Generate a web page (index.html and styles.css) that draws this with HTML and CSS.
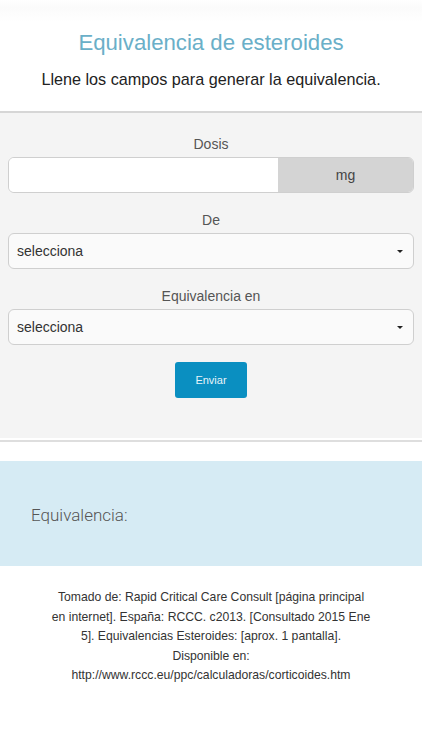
FILE: index.html
```html
<!DOCTYPE html>
<html lang="es">
<head>
<meta charset="utf-8">
<title>Equivalencia de esteroides</title>
<link rel="stylesheet" href="styles.css">
</head>
<body>
<header class="header">
  <h1 class="title">Equivalencia de esteroides</h1>
  <p class="subtitle">Llene los campos para generar la equivalencia.</p>
</header>
<section class="form">
  <div class="group">
    <div class="label">Dosis</div>
    <div class="input-group">
      <div class="input"></div>
      <div class="addon">mg</div>
    </div>
  </div>
  <div class="group">
    <div class="label">De</div>
    <div class="select"><span>selecciona</span><span class="caret"></span></div>
  </div>
  <div class="group">
    <div class="label">Equivalencia en</div>
    <div class="select"><span>selecciona</span><span class="caret"></span></div>
  </div>
  <div class="actions">
    <div class="button">Enviar</div>
  </div>
</section>
<section class="result">
  <div class="result-text">Equivalencia:</div>
</section>
<footer class="footer">
  Tomado de: Rapid Critical Care Consult [página principal<br>
  en internet]. España: RCCC. c2013. [Consultado 2015 Ene<br>
  5]. Equivalencias Esteroides: [aprox. 1 pantalla].<br>
  Disponible en:<br>
  http://www.rccc.eu/ppc/calculadoras/corticoides.htm
</footer>
</body>
</html>
```
FILE: styles.css
```css
html, body {
  margin: 0;
  padding: 0;
  background: #ffffff;
  font-family: "Liberation Sans", Arial, sans-serif;
}

.header {
  padding: 30px 0 22px;
  text-align: center;
  background: linear-gradient(#ffffff 0, #fbfbfb 8px, #ffffff 22px);
}

.title {
  margin: 0;
  font-size: 22.2px;
  line-height: 26px;
  font-weight: normal;
  color: #6aafc8;
}

.subtitle {
  margin: 13px 0 0;
  font-size: 16.2px;
  line-height: 20px;
  color: #222222;
}

.form {
  background: #f4f4f4;
  border-top: 2px solid #d6d6d6;
  border-bottom: 2px solid #dedede;
  box-shadow: inset 0 -2px 0 #ffffff;
  padding: 21px 8px 42px;
  display: flex;
  flex-direction: column;
  gap: 17px;
}

.group {
  display: flex;
  flex-direction: column;
  gap: 3px;
}

.label {
  text-align: center;
  font-size: 14px;
  line-height: 20px;
  color: #555555;
}

.input-group {
  display: flex;
  height: 36px;
  border: 1px solid #cfcfcf;
  border-radius: 6px;
  overflow: hidden;
  box-sizing: border-box;
}

.input {
  width: 269px;
  background: #ffffff;
}

.addon {
  flex: 1;
  background: #d4d4d4;
  display: flex;
  align-items: center;
  justify-content: center;
  font-size: 14px;
  color: #444444;
}

.select {
  height: 36px;
  box-sizing: border-box;
  border: 1px solid #cfcfcf;
  border-radius: 6px;
  background: #fafafa;
  display: flex;
  align-items: center;
  justify-content: space-between;
  padding: 0 10px 0 8px;
  font-size: 14px;
  color: #333333;
}

.caret {
  width: 0;
  height: 0;
  border-left: 3px solid transparent;
  border-right: 3px solid transparent;
  border-top: 3px solid #222222;
}

.actions {
  display: flex;
  justify-content: center;
}

.button {
  width: 72px;
  height: 36px;
  border-radius: 3px;
  background: #0a8fc1;
  color: #e8f4fa;
  font-size: 11px;
  display: flex;
  align-items: center;
  justify-content: center;
}

.result {
  margin-top: 19px;
  height: 105px;
  background: #d6ebf4;
  display: flex;
  align-items: center;
  padding: 0 31px;
}

.result-text {
  font-family: Roboto, "Liberation Sans", sans-serif;
  font-weight: 300;
  font-size: 17px;
  color: #555555;
  padding-top: 3px;
}

.footer {
  padding: 22px 30px 0;
  text-align: center;
  font-size: 12.2px;
  line-height: 19.5px;
  color: #333333;
}
```
